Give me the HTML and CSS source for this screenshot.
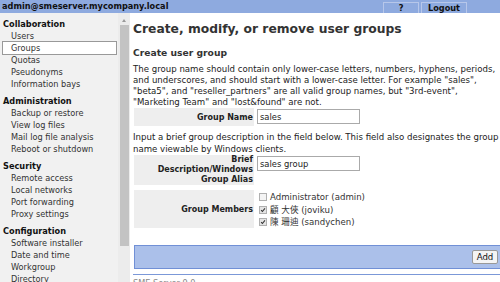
FILE: index.html
```html
<!DOCTYPE html>
<html lang="en">
<head>
    <meta charset="UTF-8">
    <title>Groups - SME Server</title>
    <link rel="stylesheet" href="styles.css">
</head>
<body>
    <div class="topbar">
        <span class="user">admin@smeserver.mycompany.local</span>
        <div class="top-links">
            <a class="top-btn help" href="#">?</a>
            <a class="top-btn logout" href="#">Logout</a>
        </div>
    </div>

    <div class="layout">
        <nav class="sidebar">
            <div class="nav-group">
                <div class="nav-head">Collaboration</div>
                <a class="nav-item" href="#">Users</a>
                <a class="nav-item active" href="#">Groups</a>
                <a class="nav-item" href="#">Quotas</a>
                <a class="nav-item" href="#">Pseudonyms</a>
                <a class="nav-item" href="#">Information bays</a>
            </div>
            <div class="nav-group">
                <div class="nav-head">Administration</div>
                <a class="nav-item" href="#">Backup or restore</a>
                <a class="nav-item" href="#">View log files</a>
                <a class="nav-item" href="#">Mail log file analysis</a>
                <a class="nav-item" href="#">Reboot or shutdown</a>
            </div>
            <div class="nav-group">
                <div class="nav-head">Security</div>
                <a class="nav-item" href="#">Remote access</a>
                <a class="nav-item" href="#">Local networks</a>
                <a class="nav-item" href="#">Port forwarding</a>
                <a class="nav-item" href="#">Proxy settings</a>
            </div>
            <div class="nav-group">
                <div class="nav-head">Configuration</div>
                <a class="nav-item" href="#">Software installer</a>
                <a class="nav-item" href="#">Date and time</a>
                <a class="nav-item" href="#">Workgroup</a>
                <a class="nav-item" href="#">Directory</a>
            </div>
        </nav>

        <!-- frame scrollbar -->
        <div class="scrollbar">
            <span class="arrow"></span>
            <span class="thumb"></span>
        </div>

        <main class="main">
            <h1>Create, modify, or remove user groups</h1>
            <h2>Create user group</h2>
            <p class="desc first">The group name should contain only lower-case letters, numbers, hyphens, periods, and underscores, and should start with a lower-case letter. For example "sales", "beta5", and "reseller_partners" are all valid group names, but "3rd-event", "Marketing Team" and "lost&amp;found" are not.</p>

            <div class="form-row">
                <div class="label">Group Name</div>
                <div class="field"><input class="text-input" type="text" value="sales"></div>
            </div>

            <p class="desc second">Input a brief group description in the field below. This field also designates the group name viewable by Windows clients.</p>

            <div class="form-row">
                <div class="label tall">Brief Description/Windows Group Alias</div>
                <div class="field"><input class="text-input" type="text" value="sales group"></div>
            </div>

            <div class="form-row members">
                <div class="label center">Group Members</div>
                <div class="field list">
                    <label class="member"><span class="check"></span>Administrator (admin)</label>
                    <label class="member"><span class="check on"><svg viewBox="0 0 8 8"><path d="M1.5 4.2 L3.2 6 L6.6 1.8" /></svg></span>顧 大俠 (joviku)</label>
                    <label class="member"><span class="check on"><svg viewBox="0 0 8 8"><path d="M1.5 4.2 L3.2 6 L6.6 1.8" /></svg></span>陳 珊迪 (sandychen)</label>
                </div>
            </div>

            <div class="button-bar">
                <button class="btn">Add</button>
            </div>

            <div class="footer">SME Server 9.0</div>
        </main>
    </div>
</body>
</html>
```

FILE: styles.css
```css
html, body {
    margin: 0;
    padding: 0;
    height: 282px;
    overflow: hidden;
}
body {
    font-family: 'DejaVu Sans', Verdana, sans-serif;
    font-size: 8.2px;
    color: #222;
    background: #fff;
}
a {
    color: inherit;
    text-decoration: none;
}

/* Top bar */
.topbar {
    display: flex;
    justify-content: space-between;
    height: 13px;
    background: #8eaadf;
}
.user {
    font-weight: bold;
    padding-left: 2px;
    line-height: 13px;
    color: #111;
}
.top-links {
    display: flex;
    align-items: flex-end;
    gap: 2px;
    margin-right: 33px;
}
.top-btn {
    display: block;
    box-sizing: border-box;
    height: 11px;
    line-height: 10px;
    text-align: center;
    font-weight: bold;
    color: #111;
    border: 1px solid #b7c7ea;
    border-bottom: none;
}
.help { width: 36px; }
.logout { width: 46px; }

/* Layout */
.layout {
    display: flex;
    height: 269px;
}
.sidebar {
    width: 118px;
    background: #f1f1f1;
    padding-top: 5px;
    box-sizing: border-box;
}
.nav-group {
    margin-bottom: 5px;
}
.nav-head {
    font-weight: bold;
    line-height: 12px;
    padding-left: 3px;
    color: #111;
}
.nav-item {
    display: block;
    line-height: 12px;
    padding-left: 9px;
    margin: 0 1px 0 2px;
    color: #333;
}
.nav-item.active {
    line-height: 10px;
    padding-top: 1px;
    padding-bottom: 1px;
    padding-left: 8px;
    background: #fff;
    border: 1px solid #999;
    margin-top: -1px;
}
.nav-item.active + .nav-item {
    margin-top: -1px;
}

/* Fake frame scrollbar */
.scrollbar {
    width: 12px;
    background: #ececec;
    display: flex;
    flex-direction: column;
    align-items: center;
}
.arrow {
    width: 0;
    height: 0;
    margin-top: 6px;
    border-left: 2px solid transparent;
    border-right: 2px solid transparent;
    border-bottom: 3px solid #9a9a9a;
}
.thumb {
    display: block;
    width: 9px;
    height: 221px;
    margin-top: 3px;
    background: #c3c3c3;
}

/* Main content */
.main {
    flex: 1;
    padding-left: 3px;
    overflow: hidden;
}
h1 {
    font-size: 12.3px;
    margin: 8px 0 0;
    line-height: 16px;
    color: #333;
}
h2 {
    font-size: 9.2px;
    margin: 10px 0 0;
    line-height: 12px;
    color: #333;
}
.desc {
    font-size: 8.6px;
    line-height: 11px;
    width: 366px;
    color: #222;
}
.desc.first {
    margin: 5px 0 0;
}
.desc.second {
    margin: 6px 0 0;
    line-height: 11.5px;
}
.form-row {
    display: flex;
    gap: 3px;
    margin-left: 1px;
}
.members {
    margin-top: 5px;
}
.label {
    width: 120px;
    box-sizing: border-box;
    background: #eee;
    font-weight: bold;
    font-size: 8px;
    text-align: right;
    padding: 4px 1px 0 0;
    height: 18px;
    line-height: 11px;
    color: #222;
}
.label.tall {
    height: 30px;
    line-height: 10px;
    padding: 0 1px 0 12px;
}
.label.center {
    display: flex;
    align-items: center;
    justify-content: flex-end;
    padding-top: 0;
    height: 38px;
}
.text-input {
    box-sizing: border-box;
    width: 103px;
    height: 15px;
    margin: 1px 0 0;
    padding: 0 2px;
    border: 1px solid #aaa;
    font-family: 'DejaVu Sans', Verdana, sans-serif;
    font-size: 8.4px;
    color: #222;
}
.list {
    display: flex;
    flex-direction: column;
    padding-top: 1px;
}
.member {
    display: flex;
    align-items: center;
    gap: 3px;
    line-height: 12.5px;
    padding-left: 2px;
    font-size: 8.6px;
    font-family: 'DejaVu Sans', 'Noto Sans CJK TC', sans-serif;
    color: #333;
}
.check {
    display: inline-block;
    box-sizing: border-box;
    width: 8px;
    height: 8px;
    border: 1px solid #b0b0b0;
    background: #f4f4f4;
}
.check.on {
    background: #e4e4e4;
}
.check svg {
    display: block;
    width: 6px;
    height: 6px;
    fill: none;
    stroke: #333;
    stroke-width: 1.4;
}

.button-bar {
    display: flex;
    justify-content: flex-end;
    align-items: center;
    height: 24px;
    box-sizing: border-box;
    margin: 16px -1px 0 1px;
    background: #abc0ea;
    border: 1px solid #7190d6;
    padding-right: 2px;
}
.btn {
    font-family: 'DejaVu Sans', Verdana, sans-serif;
    font-size: 8.6px;
    height: 14px;
    width: 26px;
    padding: 0;
    background: #f4f4f4;
    border: 1px solid #999;
    border-radius: 2px;
    color: #111;
}
.footer {
    margin-top: 5px;
    border-top: 1px solid #7b98d8;
    padding-top: 3px;
    color: #888;
    line-height: 11px;
}
```
